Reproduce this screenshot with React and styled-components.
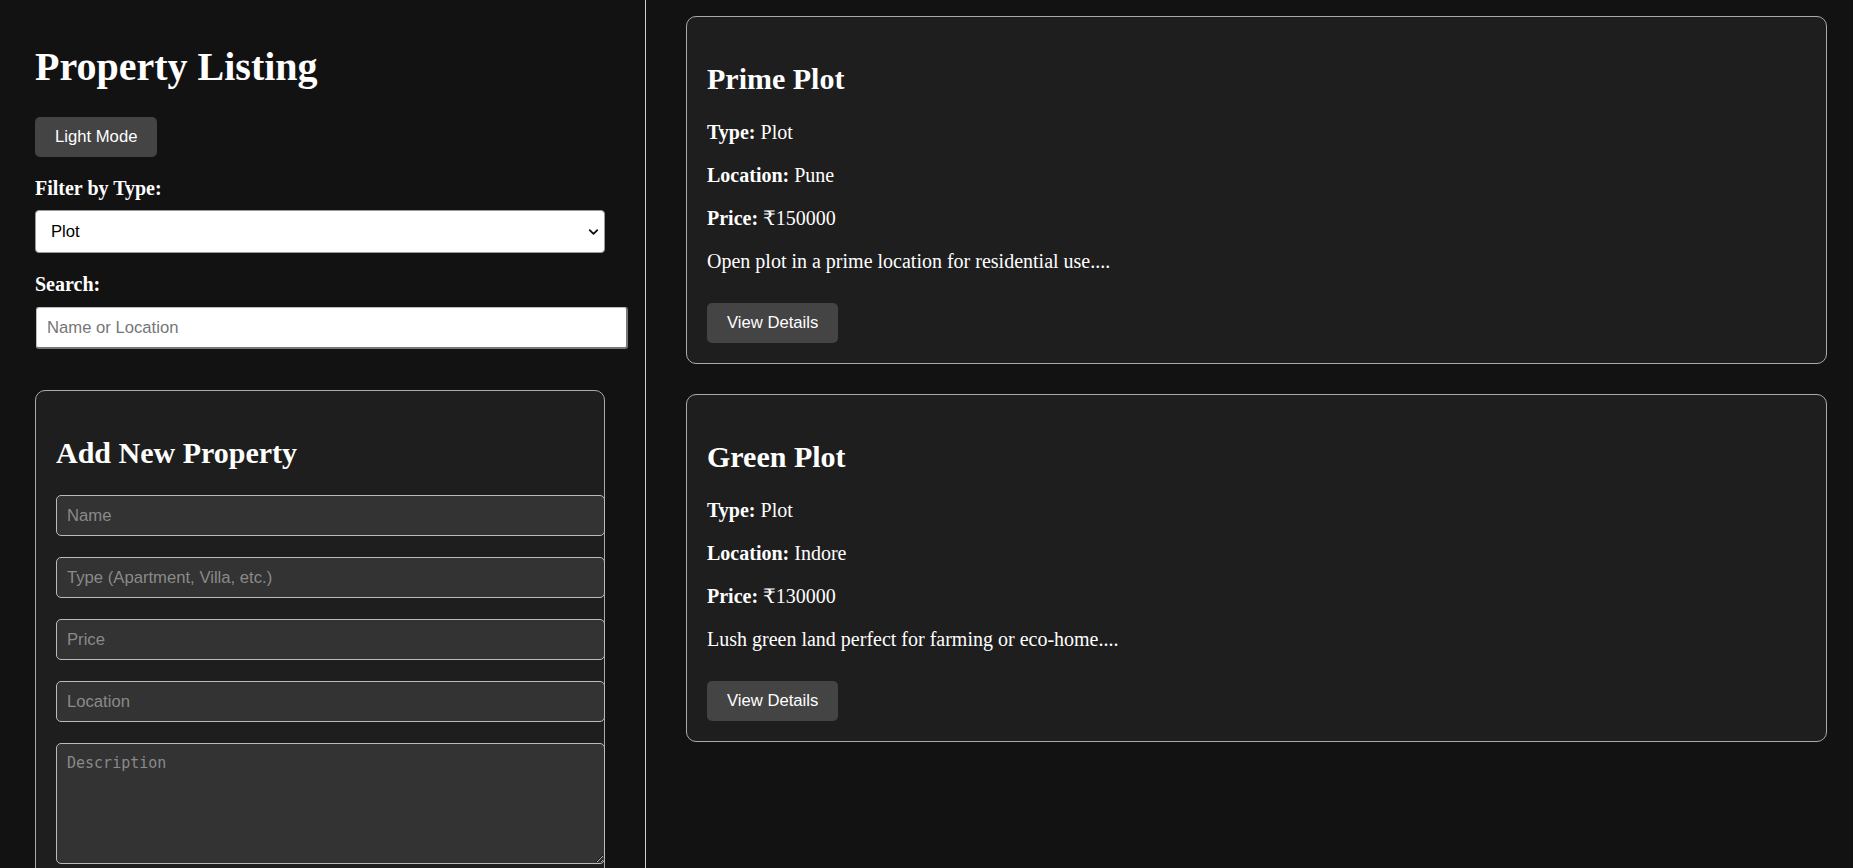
import React, { useState } from "react";
import styled, { createGlobalStyle } from "styled-components";
import { ChevronDown } from "lucide-react";

const GlobalStyle = createGlobalStyle`
  html, body {
    margin: 0;
    padding: 0;
    background: #121212;
    overflow: hidden;
  }
  * {
    box-sizing: border-box;
  }
`;

const properties = [
  {
    name: "Prime Plot",
    type: "Plot",
    location: "Pune",
    price: 150000,
    description: "Open plot in a prime location for residential use.",
  },
  {
    name: "Green Plot",
    type: "Plot",
    location: "Indore",
    price: 130000,
    description: "Lush green land perfect for farming or eco-home.",
  },
];

function App() {
  const [type, setType] = useState("Plot");
  const [search, setSearch] = useState("");

  return (
    <Layout>
      <GlobalStyle />
      <Sidebar>
        <Title>Property Listing</Title>
        <ModeBtn>Light Mode</ModeBtn>
        <Label>Filter by Type:</Label>
        <SelectWrap>
          <Select value={type} onChange={(e) => setType(e.target.value)}>
            <option value="">All</option>
            <option value="Apartment">Apartment</option>
            <option value="Villa">Villa</option>
            <option value="Plot">Plot</option>
          </Select>
          <SelectIcon>
            <ChevronDown size={15} strokeWidth={3} />
          </SelectIcon>
        </SelectWrap>
        <Label>Search:</Label>
        <SearchInput
          placeholder="Name or Location"
          value={search}
          onChange={(e) => setSearch(e.target.value)}
        />

        <FormCard>
          <CardTitle>Add New Property</CardTitle>
          <FormInput placeholder="Name" />
          <FormInput placeholder="Type (Apartment, Villa, etc.)" />
          <FormInput placeholder="Price" />
          <FormInput placeholder="Location" />
          <FormArea placeholder="Description" />
        </FormCard>
      </Sidebar>

      <Listing>
        {properties.map((p) => (
          <PropertyCard key={p.name}>
            <CardTitle>{p.name}</CardTitle>
            <Info>
              <strong>Type:</strong> {p.type}
            </Info>
            <Info>
              <strong>Location:</strong> {p.location}
            </Info>
            <Info>
              <strong>Price:</strong> ₹{p.price}
            </Info>
            <Info>{p.description}...</Info>
            <ActionBtn>View Details</ActionBtn>
          </PropertyCard>
        ))}
      </Listing>
    </Layout>
  );
}

const Layout = styled.div`
  display: flex;
  height: 100vh;
  overflow: hidden;
  background: #121212;
  color: #fff;
  font-family: "Liberation Serif", "DejaVu Serif", serif;
`;

const Sidebar = styled.div`
  width: 646px;
  flex-shrink: 0;
  padding: 17px 40px 0 35px;
  border-right: 1px solid #cfcfcf;
`;

const Title = styled.h1`
  font-size: 40px;
  line-height: 46px;
  font-weight: bold;
  margin: 27px 0;
`;

const ModeBtn = styled.button`
  height: 40px;
  padding: 0 20px;
  border: none;
  border-radius: 5px;
  background-color: #444;
  color: #fff;
  font-family: "Liberation Sans", Arial, sans-serif;
  font-size: 16.67px;
  margin-bottom: 20px;
  cursor: pointer;
`;

const Label = styled.label`
  display: block;
  font-size: 20px;
  line-height: 23px;
  font-weight: bold;
  margin-bottom: 10px;
`;

const SelectWrap = styled.div`
  position: relative;
  width: 570px;
  margin-bottom: 20px;
`;

const Select = styled.select`
  appearance: none;
  width: 100%;
  height: 43px;
  padding: 0 15px;
  border: 1px solid #9a9a9a;
  border-radius: 4px;
  background: #fff;
  color: #000;
  font-family: "Liberation Sans", Arial, sans-serif;
  font-size: 16.67px;
  outline: none;
`;

const SelectIcon = styled.span`
  position: absolute;
  right: 4px;
  top: 50%;
  transform: translateY(-50%);
  display: flex;
  width: 15px;
  color: #111;
  pointer-events: none;
`;

const SearchInput = styled.input`
  display: block;
  width: 592px;
  height: 42px;
  margin: 11px 0 41px 1px;
  padding: 0 10px;
  border: 1px solid #bbb;
  border-right: 2px solid #777;
  border-bottom: 2px solid #777;
  border-radius: 3px;
  background: #fff;
  font-family: "Liberation Sans", Arial, sans-serif;
  font-size: 16.67px;
  outline: none;

  &::placeholder {
    color: #767676;
  }
`;

const FormCard = styled.div`
  width: 570px;
  padding: 20px;
  border: 1px solid #aaa;
  border-radius: 10px;
  background-color: #1e1e1e;
`;

const CardTitle = styled.h2`
  font-size: 30px;
  line-height: 34px;
  font-weight: bold;
  margin: 25px 0 25px;
`;

const FormInput = styled.input`
  display: block;
  width: 549px;
  height: 41px;
  margin-bottom: 21px;
  padding: 0 10px;
  border: 1px solid #bbb;
  border-radius: 5px;
  background-color: #333;
  color: #fff;
  font-family: "Liberation Sans", Arial, sans-serif;
  font-size: 16.67px;
  outline: none;

  &::placeholder {
    color: #8a8a8a;
  }
`;

const FormArea = styled.textarea`
  display: block;
  width: 549px;
  height: 121px;
  margin-bottom: 21px;
  padding: 10px;
  border: 1px solid #bbb;
  border-radius: 5px;
  background-color: #333;
  color: #fff;
  font-family: "DejaVu Sans Mono", "Liberation Mono", monospace;
  font-size: 15px;
  outline: none;

  &::placeholder {
    color: #8a8a8a;
  }
`;

const Listing = styled.div`
  flex: 1;
  padding: 16px 26px 0 40px;
`;

const PropertyCard = styled.div`
  display: flex;
  flex-direction: column;
  align-items: flex-start;
  padding: 20px;
  border: 1px solid #aaa;
  border-radius: 10px;
  background-color: #1e1e1e;
  margin-bottom: 30px;
`;

const Info = styled.p`
  font-size: 20px;
  line-height: 23px;
  margin: 0 0 20px;
`;

const ActionBtn = styled.button`
  height: 40px;
  margin-top: 10px;
  padding: 0 20px;
  border: none;
  border-radius: 5px;
  background-color: #444;
  color: #fff;
  font-family: "Liberation Sans", Arial, sans-serif;
  font-size: 16.67px;
  cursor: pointer;
`;

export default App;
